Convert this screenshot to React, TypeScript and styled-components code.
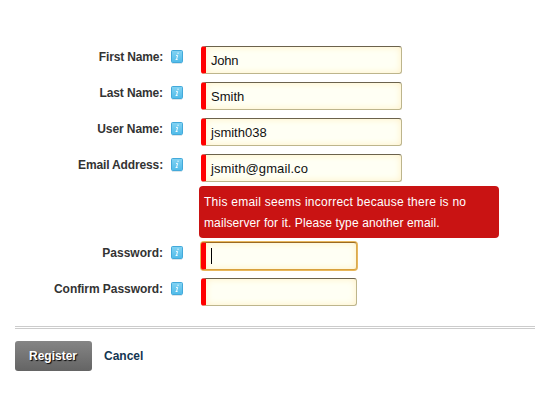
import React from "react";
import styled, { createGlobalStyle, css } from "styled-components";

const GlobalStyle = createGlobalStyle`
  *, *::before, *::after { box-sizing: border-box; }
  html, body { margin: 0; background: #fff; overflow: hidden; }
  body { font-family: "Liberation Sans", Arial, sans-serif; }
`;

const Form = styled.form`
  width: 535px;
  height: 412px;
  padding: 46px 0 0 15px;
  background: #fff;
`;

const Fields = styled.div`
  display: flex;
  flex-direction: column;
  gap: 8px;
`;

const Row = styled.div`
  display: grid;
  grid-template-columns: 148px 12px 1fr;
  column-gap: 8px;
  height: 28px;
`;

const Label = styled.label<{ $spacing?: number }>`
  font-size: 12px;
  font-weight: bold;
  line-height: 22px;
  text-align: right;
  white-space: nowrap;
  color: #333;
  letter-spacing: ${(p) => p.$spacing ?? 0}px;
`;

const Info = styled.svg`
  display: block;
  margin-top: 4px;
`;

const Field = styled.div<{ $short?: boolean; $focused?: boolean }>`
  display: flex;
  align-items: center;
  width: ${(p) => (p.$short ? 156 : 201)}px;
  height: 28px;
  margin-left: 10px;
  border: 1px solid #bdb58c;
  border-top-color: #6b624c;
  border-left: 5px solid #f00;
  border-radius: 3px;
  background: #fffff4;
  box-shadow: inset 0 0 7px #fff0c4;
  ${(p) =>
    p.$focused &&
    css`
      border-color: #d29a35 #d8a94f #d8a13c #f00;
      border-top-color: #9c6a20;
      box-shadow: inset 0 0 7px #fff0c4, 0 0 0 1px #e8b75b;
    `}
`;

const Value = styled.span<{ $spacing: number }>`
  padding: 1px 0 0 5px;
  font-size: 13px;
  line-height: 16px;
  color: #111;
  letter-spacing: ${(p) => p.$spacing}px;
`;

const Caret = styled.i`
  width: 1px;
  height: 16px;
  margin-left: 5px;
  background: #000;
`;

const ErrorBox = styled.div`
  width: 300px;
  height: 52px;
  margin: -4px 0 -4px 184px;
  padding: 6px 5px 0;
  border-radius: 4px;
  background: #c91313;
  color: #fff;
  font-size: 12px;
  line-height: 21px;
  white-space: nowrap;
`;

const ErrorLine = styled.div<{ $spacing: number }>`
  letter-spacing: ${(p) => p.$spacing}px;
`;

const Divider = styled.div`
  height: 3px;
  margin-top: 20px;
  border: solid #ccc;
  border-width: 1px 0;
`;

const Actions = styled.div`
  display: flex;
  align-items: center;
  gap: 12px;
  margin-top: 12px;
`;

const Register = styled.button`
  width: 77px;
  height: 30px;
  padding: 0 1px 0 0;
  border: 0;
  border-radius: 3px;
  background: linear-gradient(#858585, #646464);
  color: #fff;
  font: bold 12px "Liberation Sans", Arial, sans-serif;
  text-shadow: 1px 1px 1px #000;
`;

const Cancel = styled.a`
  color: #133652;
  font-size: 12px;
  font-weight: bold;
`;

function InfoIcon() {
  return (
    <Info width="12" height="15" viewBox="0 0 12 15" aria-label="Information">
      <defs>
        <linearGradient id="infoFill" x1="0" y1="0" x2="0" y2="1">
          <stop offset="0" stopColor="#83d3f3" />
          <stop offset="1" stopColor="#50bbe9" />
        </linearGradient>
      </defs>
      <rect x="1" y="13" width="10" height="1" fill="#dbe5ea" />
      <rect x="0.5" y="0.5" width="11" height="12" rx="1" fill="url(#infoFill)" stroke="#43a9da" />
      <path d="M6.4 3.2h1.3M5 5.4h1.6l-1 4M4.6 9.5h2" fill="none" stroke="#f5fcff" strokeWidth="1" />
    </Info>
  );
}

interface RowProps {
  label: string;
  value?: string;
  labelSpacing?: number;
  valueSpacing?: number;
  short?: boolean;
  focused?: boolean;
}

function FormRow({ label, value, labelSpacing, valueSpacing = 0, short, focused }: RowProps) {
  return (
    <Row>
      <Label $spacing={labelSpacing}>{label}</Label>
      <InfoIcon />
      <Field $short={short} $focused={focused}>
        {value && <Value $spacing={valueSpacing}>{value}</Value>}
        {focused && <Caret />}
      </Field>
    </Row>
  );
}

export default function App() {
  return (
    <>
      <GlobalStyle />
      <Form>
        <Fields>
          <FormRow label="First Name:" labelSpacing={-0.17} value="John" valueSpacing={-0.25} />
          <FormRow label="Last Name:" labelSpacing={-0.12} value="Smith" />
          <FormRow label="User Name:" labelSpacing={-0.1} value="jsmith038" />
          <FormRow label="Email Address:" labelSpacing={-0.14} value="jsmith@gmail.co" valueSpacing={0.1} />
          <ErrorBox role="alert">
            <ErrorLine $spacing={0.25}>This email seems incorrect because there is no</ErrorLine>
            <ErrorLine $spacing={0.11}>mailserver for it. Please type another email.</ErrorLine>
          </ErrorBox>
          <FormRow label="Password:" short focused />
          <FormRow label="Confirm Password:" labelSpacing={-0.06} short />
        </Fields>
        <Divider />
        <Actions>
          <Register type="button">Register</Register>
          <Cancel>Cancel</Cancel>
        </Actions>
      </Form>
    </>
  );
}
